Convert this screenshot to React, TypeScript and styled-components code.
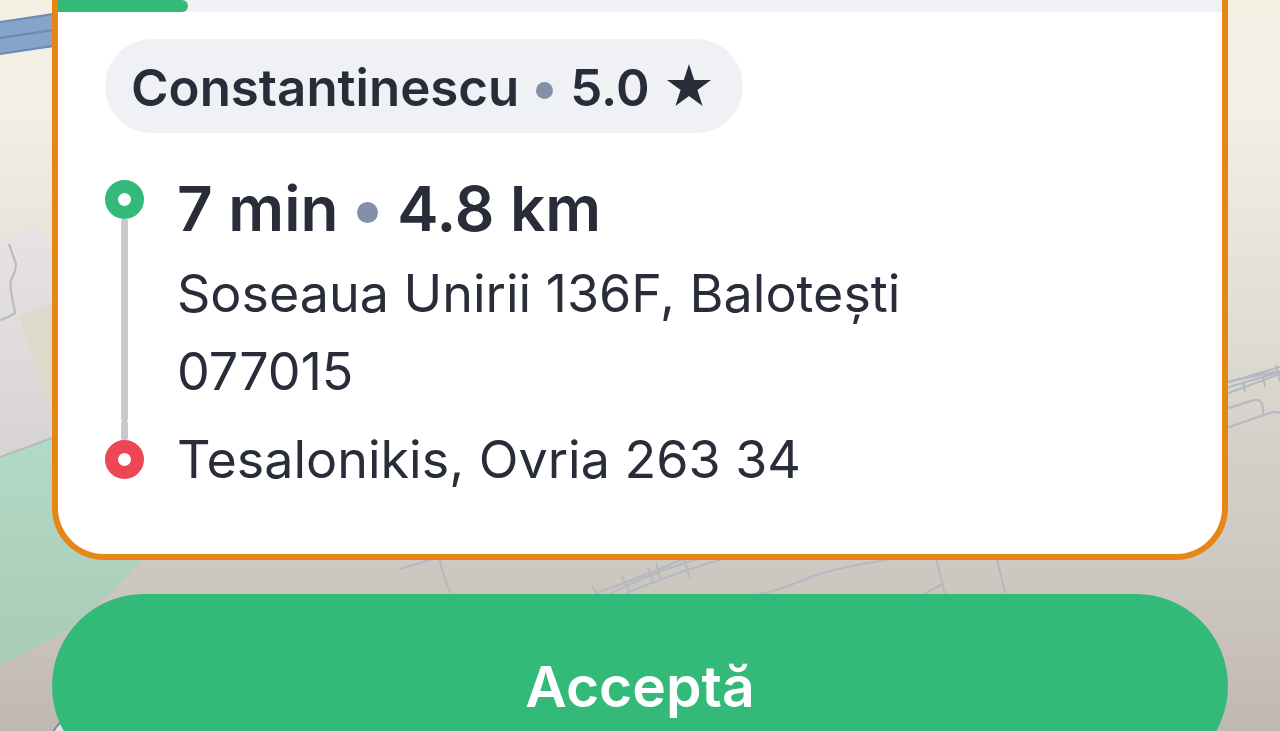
import React from "react";
import styled, { createGlobalStyle } from "styled-components";

const ink = "#282d39";
const green = "#33ba78";
const red = "#ec4755";

const GlobalStyle = createGlobalStyle`
  *, *::before, *::after { box-sizing: border-box; }
  body {
    margin: 0;
    font-family: Inter, "Liberation Sans", sans-serif;
    color: ${ink};
  }
`;

const Screen = styled.main`
  position: relative;
  height: 100vh;
  overflow: hidden;
  padding: 0 52px;
  background: #cfc9bf;
`;

const MapCanvas = styled.svg`
  position: absolute;
  inset: 0;
  width: 100%;
  height: 100%;
`;

const Content = styled.div`
  position: relative;
  display: flex;
  flex-direction: column;
  gap: 34px;
`;

const Card = styled.section`
  border: 6px solid #e88517;
  border-top: 0;
  border-radius: 0 0 52px 52px;
  background: #fff;
`;

const Track = styled.div`
  height: 12px;
  background: #f0f1f5;
`;

const Bar = styled.div`
  height: 100%;
  border-radius: 0 6px 6px 0;
  background: ${green};
`;

const CardBody = styled.div`
  display: flex;
  flex-direction: column;
  align-items: flex-start;
  gap: 40px;
  padding: 27px 47px 55px;
`;

const Chip = styled.div`
  display: flex;
  align-items: center;
  gap: 17px;
  height: 94px;
  padding: 2px 32px 0 26px;
  border-radius: 47px;
  background: #f0f1f5;
  font-size: 51px;
  font-weight: 600;
  white-space: nowrap;
`;

const Dot = styled.span<{ $size: number }>`
  flex: none;
  width: ${(p) => p.$size}px;
  height: ${(p) => p.$size}px;
  margin-top: 6px;
  border-radius: 50%;
  background: #8290a8;
`;

const Star = styled.svg`
  width: 44px;
  height: 42px;
  margin-top: -4px;
  fill: ${ink};
`;

const Route = styled.ol`
  list-style: none;
  margin: 0;
  padding: 0;
`;

const Stop = styled.li`
  display: flex;
  gap: 33px;
`;

const Rail = styled.div<{ $top?: number }>`
  display: flex;
  flex-direction: column;
  align-items: center;
  padding-top: ${(p) => p.$top ?? 0}px;
`;

const Ring = styled.span<{ $color: string }>`
  width: 39px;
  height: 39px;
  border: 13px solid ${(p) => p.$color};
  border-radius: 50%;
  background: #fff;
`;

const Line = styled.span<{ $height?: number }>`
  width: 7px;
  border-radius: 2px;
  background: #c9c8ce;
  ${(p) => (p.$height ? `height: ${p.$height}px;` : "flex: 1;")}
`;

const StopText = styled.div`
  padding-bottom: 10px;
`;

const Summary = styled.h1`
  display: flex;
  align-items: center;
  gap: 19px;
  margin: 0 0 10px;
  font-size: 62px;
  line-height: 72px;
  font-weight: 600;
`;

const Address = styled.p`
  max-width: 780px;
  margin: 0;
  font-size: 52px;
  line-height: 78px;
`;

const AcceptButton = styled.button`
  height: 184px;
  border: 0;
  border-radius: 92px;
  background: ${green};
  color: #fff;
  font: 600 57px Inter, "Liberation Sans", sans-serif;
  cursor: pointer;
`;

function MapBackground() {
  return (
    <MapCanvas viewBox="0 0 1280 731" preserveAspectRatio="xMidYMin slice" aria-hidden="true">
      <defs>
        <linearGradient id="land" x1="0" y1="0" x2="0" y2="1">
          <stop offset="0" stopColor="#f5f0e4" />
          <stop offset="0.15" stopColor="#f3efe4" />
          <stop offset="0.46" stopColor="#dfdcd2" />
          <stop offset="0.6" stopColor="#d5d1ca" />
          <stop offset="0.77" stopColor="#cec9c0" />
          <stop offset="1" stopColor="#c0b9b3" />
        </linearGradient>
        <linearGradient id="town" x1="0" y1="0" x2="0" y2="1">
          <stop offset="0" stopColor="#e7e3e4" />
          <stop offset="1" stopColor="#d8d3d3" />
        </linearGradient>
        <linearGradient id="park" x1="0" y1="0" x2="0" y2="1">
          <stop offset="0" stopColor="#b2dac6" />
          <stop offset="1" stopColor="#a9cbb7" />
        </linearGradient>
      </defs>
      <rect width="1280" height="731" fill="url(#land)" />
      <path d="M0 242L38 225L60 270V440L0 460Z" fill="url(#town)" />
      <path d="M20 316L60 300V410H50Z" fill="#dddacb" />
      <path d="M0 457L60 435L142 560L110 594L62 634L0 665Z" fill="url(#park)" />
      <path d="M0 457L60 435" stroke="#b0bdbd" strokeWidth="2" />
      <path d="M0 22L60 13V46L0 54Z" fill="#86a4c7" />
      <path d="M0 22L60 13M0 38L60 29M0 54L60 45" stroke="#688bb4" strokeWidth="2" fill="none" />
      <g fill="none" stroke="#b4b9c0" strokeWidth="2">
        <path d="M9 244L16 264Q16 271 11 280Q9 286 15 312Q15 315 0 320" />
        <path d="M400 569L440 557M439 556Q442 574 452 596" />
        <path d="M594 594Q645 576 690 556M610 594Q660 568 710 556M625 594Q670 574 730 557M592 586L598 596M622 576L630 594M648 568L654 584M656 563L660 578M684 558L690 579" />
        <path d="M758 594Q775 592 808 578Q835 567 900 558M936 558L945 595M924 594L943 584M996 556L1006 596" />
        <path d="M1226 382L1280 371M1226 388L1280 372M1226 394L1280 374M1226 383L1280 367M1276 365L1280 382M1243 381L1245 392M1263 376L1265 387M1226 409L1254 400Q1264 398 1263 414M1226 428L1270 413Q1275 411 1280 413" />
      </g>
      <circle cx="74" cy="740" r="22" fill="#e5e4e8" stroke="#858891" strokeWidth="2" />
      <circle cx="76" cy="742" r="16" fill="#666c7a" />
    </MapCanvas>
  );
}

export default function App() {
  const elapsed = 11.2;
  return (
    <>
      <GlobalStyle />
      <Screen>
        <MapBackground />
        <Content>
          <Card>
            <Track role="progressbar" aria-label="Timp" aria-valuenow={elapsed} aria-valuemin={0} aria-valuemax={100}>
              <Bar style={{ width: `${elapsed}%` }} />
            </Track>
            <CardBody>
              <Chip>
                <span>Constantinescu</span>
                <Dot $size={17} />
                <span>5.0</span>
                <Star viewBox="0 0 44 42" aria-hidden="true">
                  <path d="M22 0L27.2 16H44L30.4 25.9L35.6 42L22 32L8.4 42L13.6 25.9L0 16H16.8Z" />
                </Star>
              </Chip>
              <Route>
                <Stop>
                  <Rail $top={7}>
                    <Ring $color={green} />
                    <Line />
                  </Rail>
                  <StopText>
                    <Summary>
                      <span>7 min</span>
                      <Dot $size={21} />
                      <span>4.8 km</span>
                    </Summary>
                    <Address>Soseaua Unirii 136F, Balotești 077015</Address>
                  </StopText>
                </Stop>
                <Stop>
                  <Rail>
                    <Line $height={19} />
                    <Ring $color={red} />
                  </Rail>
                  <Address>Tesalonikis, Ovria 263 34</Address>
                </Stop>
              </Route>
            </CardBody>
          </Card>
          <AcceptButton type="button">Acceptă</AcceptButton>
        </Content>
      </Screen>
    </>
  );
}
